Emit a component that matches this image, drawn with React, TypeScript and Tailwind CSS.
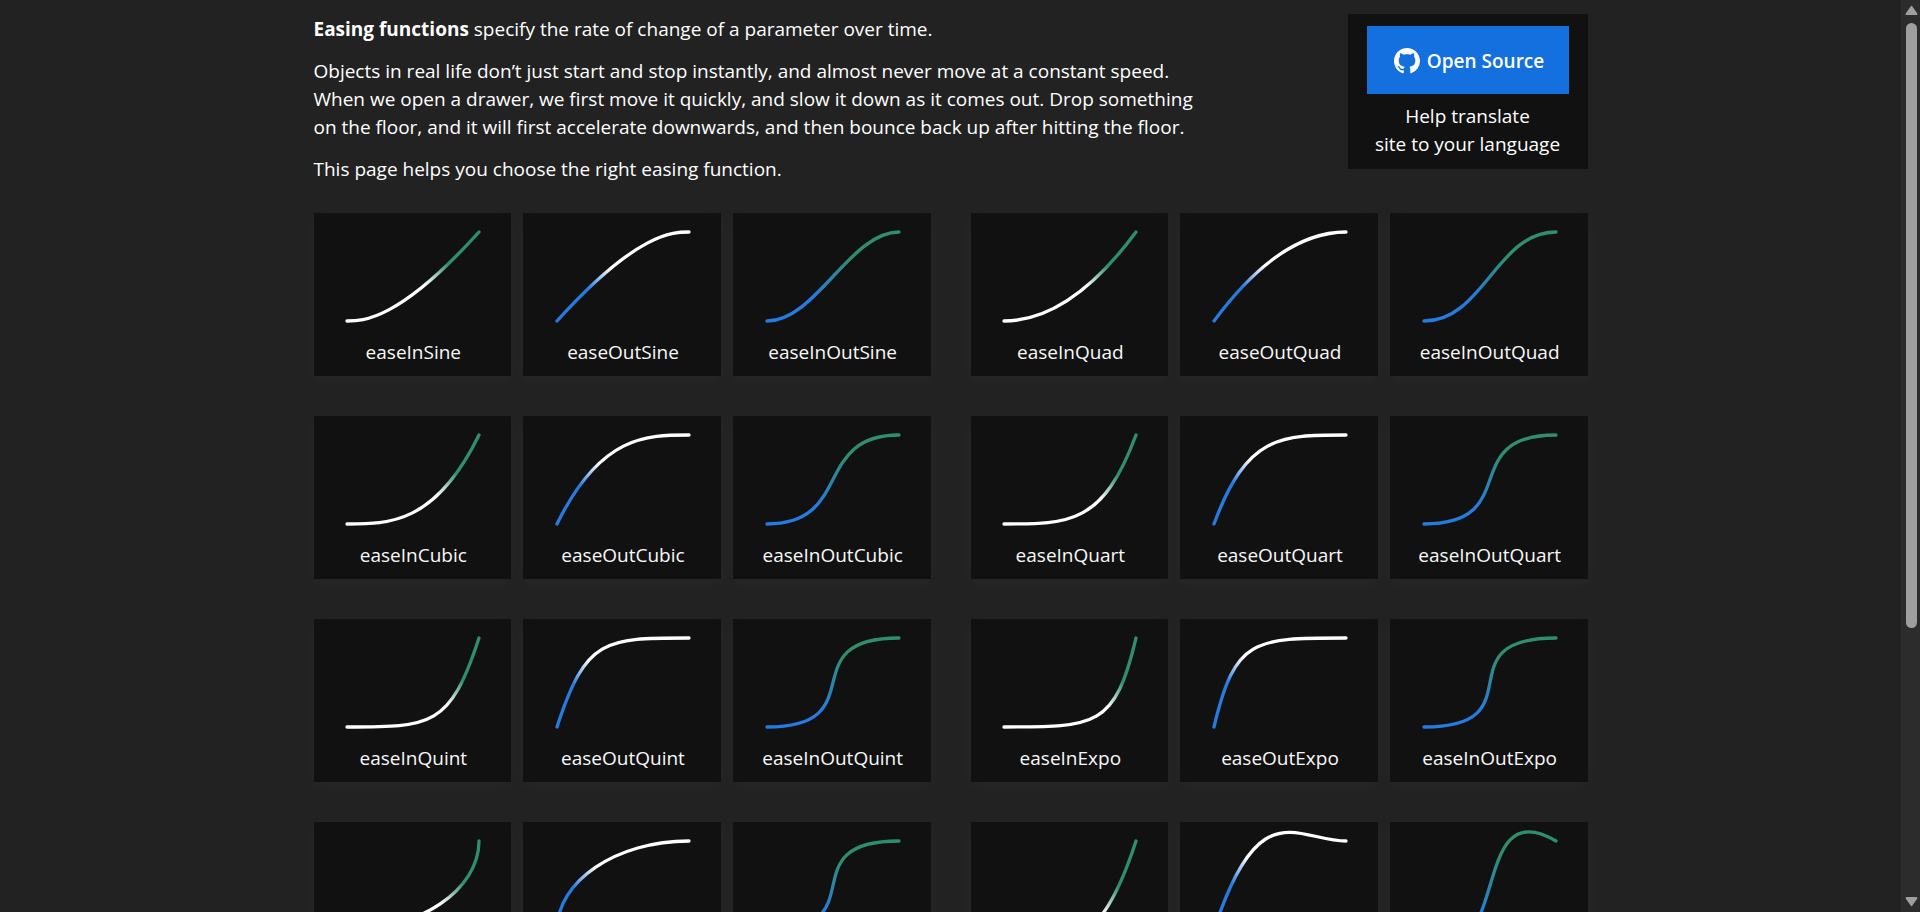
import React from "react";

type Kind = "in" | "out" | "inout";
type Points = [number, number, number, number];
type Easing = { name: string; kind: Kind; points: Points };

const groups: Easing[][] = [
  [
    { name: "easeInSine", kind: "in", points: [0.12, 0, 0.39, 0] },
    { name: "easeOutSine", kind: "out", points: [0.61, 1, 0.88, 1] },
    { name: "easeInOutSine", kind: "inout", points: [0.37, 0, 0.63, 1] },
  ],
  [
    { name: "easeInQuad", kind: "in", points: [0.11, 0, 0.5, 0] },
    { name: "easeOutQuad", kind: "out", points: [0.5, 1, 0.89, 1] },
    { name: "easeInOutQuad", kind: "inout", points: [0.45, 0, 0.55, 1] },
  ],
  [
    { name: "easeInCubic", kind: "in", points: [0.32, 0, 0.67, 0] },
    { name: "easeOutCubic", kind: "out", points: [0.33, 1, 0.68, 1] },
    { name: "easeInOutCubic", kind: "inout", points: [0.65, 0, 0.35, 1] },
  ],
  [
    { name: "easeInQuart", kind: "in", points: [0.5, 0, 0.75, 0] },
    { name: "easeOutQuart", kind: "out", points: [0.25, 1, 0.5, 1] },
    { name: "easeInOutQuart", kind: "inout", points: [0.76, 0, 0.24, 1] },
  ],
  [
    { name: "easeInQuint", kind: "in", points: [0.64, 0, 0.78, 0] },
    { name: "easeOutQuint", kind: "out", points: [0.22, 1, 0.36, 1] },
    { name: "easeInOutQuint", kind: "inout", points: [0.83, 0, 0.17, 1] },
  ],
  [
    { name: "easeInExpo", kind: "in", points: [0.7, 0, 0.84, 0] },
    { name: "easeOutExpo", kind: "out", points: [0.16, 1, 0.3, 1] },
    { name: "easeInOutExpo", kind: "inout", points: [0.87, 0, 0.13, 1] },
  ],
  [
    { name: "easeInCirc", kind: "in", points: [0.55, 0, 1, 0.45] },
    { name: "easeOutCirc", kind: "out", points: [0, 0.55, 0.45, 1] },
    { name: "easeInOutCirc", kind: "inout", points: [0.85, 0, 0.15, 1] },
  ],
  [
    { name: "easeInBack", kind: "in", points: [0.36, 0, 0.66, -0.56] },
    { name: "easeOutBack", kind: "out", points: [0.34, 1.56, 0.64, 1] },
    { name: "easeInOutBack", kind: "inout", points: [0.68, -0.6, 0.32, 1.6] },
  ],
];

const WIDTH = 132;
const HEIGHT = 89;

const gradients: Record<Kind, { from: string; to: string; start: string; end: string }> = {
  in: { from: "#ffffff", to: "#2f8f6b", start: "50%", end: "70%" },
  out: { from: "#267be0", to: "#ffffff", start: "30%", end: "50%" },
  inout: { from: "#267be0", to: "#2f8f6b", start: "30%", end: "70%" },
};

function Curve({ name, kind, points }: Easing) {
  const [x1, y1, x2, y2] = points;
  const g = gradients[kind];
  const px = (x: number) => x * WIDTH;
  const py = (y: number) => HEIGHT - y * HEIGHT;
  return (
    <svg width={WIDTH} height={HEIGHT} viewBox={`0 0 ${WIDTH} ${HEIGHT}`} className="overflow-visible" aria-hidden="true">
      <defs>
        <linearGradient id={`stroke-${name}`} x1="0" y1="1" x2="1" y2="0">
          <stop offset={g.start} stopColor={g.from} />
          <stop offset={g.end} stopColor={g.to} />
        </linearGradient>
      </defs>
      <path
        d={`M0 ${HEIGHT}C${px(x1)} ${py(y1)} ${px(x2)} ${py(y2)} ${WIDTH} 0`}
        fill="none"
        stroke={`url(#stroke-${name})`}
        strokeWidth="3.3"
        strokeLinecap="round"
      />
    </svg>
  );
}

function Card(easing: Easing) {
  return (
    <li className="flex">
      <a
        href={`#${easing.name}`}
        className="flex flex-1 flex-col items-center bg-[#111111] pt-[19px] pb-[10px] pl-0.5 shadow-[0_4px_16px_rgba(255,255,255,0.03)]"
      >
        <Curve {...easing} />
        <span className="mt-[17px] leading-7 text-[#f8f8f8]">{easing.name}</span>
      </a>
    </li>
  );
}

function GithubMark() {
  return (
    <svg width="26" height="26" viewBox="0 0 16 16" fill="currentColor" aria-hidden="true">
      <path d="M8 0C3.58 0 0 3.58 0 8c0 3.54 2.29 6.53 5.47 7.59.4.07.55-.17.55-.38 0-.19-.01-.82-.01-1.49-2.01.37-2.53-.49-2.69-.94-.09-.23-.48-.94-.82-1.13-.28-.15-.68-.52-.01-.53.63-.01 1.08.58 1.23.82.72 1.21 1.87.87 2.33.66.07-.52.28-.87.51-1.07-1.78-.2-3.64-.89-3.64-3.95 0-.87.31-1.59.82-2.15-.08-.2-.36-1.02.08-2.12 0 0 .67-.21 2.2.82.64-.18 1.32-.27 2-.27s1.36.09 2 .27c1.53-1.04 2.2-.82 2.2-.82.44 1.1.16 1.92.08 2.12.51.56.82 1.27.82 2.15 0 3.07-1.87 3.75-3.65 3.95.29.25.54.73.54 1.48 0 1.07-.01 1.93-.01 2.2 0 .21.15.46.55.38A8.01 8.01 0 0 0 16 8c0-4.42-3.58-8-8-8Z" />
    </svg>
  );
}

function Scrollbar() {
  return (
    <div className="flex w-[19px] shrink-0 flex-col items-center border-l border-[#303030] bg-[#2c2c2c] py-[5px]" aria-hidden="true">
      <svg width="13" height="10" viewBox="0 0 13 10" fill="#9f9f9f">
        <path d="M5.6 1.4Q6.5 0 7.4 1.4L12.3 8.4Q13 10 11.4 10H1.6Q0 10 .7 8.4Z" />
      </svg>
      <div className="mt-2 w-[11px] flex-[605] rounded-full bg-[#9f9f9f]" />
      <div className="flex-[269]" />
      <svg width="13" height="10" viewBox="0 0 13 10" fill="#9f9f9f">
        <path d="M5.6 8.6Q6.5 10 7.4 8.6L12.3 1.6Q13 0 11.4 0H1.6Q0 0 .7 1.6Z" />
      </svg>
    </div>
  );
}

export default function App() {
  return (
    <div className="flex h-screen overflow-hidden bg-[#222222] font-['Open_Sans','Noto_Sans',sans-serif] text-[19px] leading-7 text-white">
      <main className="min-w-0 flex-1 overflow-hidden px-4 pt-[14px]">
        <div className="mx-auto max-w-[1274px]">
          <header className="flex items-start justify-between gap-8">
            <div className="flex max-w-[900px] flex-col gap-[14px] pt-px">
              <p>
                <strong className="font-bold">Easing functions</strong> specify the rate of change of a parameter over time.
              </p>
              <p>
                Objects in real life don’t just start and stop instantly, and almost never move at a constant speed. When
                we open a drawer, we first move it quickly, and slow it down as it comes out. Drop something on the
                floor, and it will first accelerate downwards, and then bounce back up after hitting the floor.
              </p>
              <p>This page helps you choose the right easing function.</p>
            </div>
            <aside className="flex w-60 shrink-0 flex-col items-center bg-[#111111] px-[19px] pt-3 pb-[11px] text-center">
              <a
                href="#source"
                className="flex h-[68px] w-full items-center justify-center gap-[7px] bg-[#1470df] pt-0.5 pl-[3px] font-semibold"
              >
                <GithubMark />
                Open Source
              </a>
              <a href="#translate" className="mt-2">
                Help translate
                <br />
                site to your language
              </a>
            </aside>
          </header>
          <div className="mt-[30px] grid grid-cols-2 gap-10">
            {groups.map((group) => (
              <ul key={group[0].name} className="grid grid-cols-3 gap-3">
                {group.map((easing) => (
                  <Card key={easing.name} {...easing} />
                ))}
              </ul>
            ))}
          </div>
        </div>
      </main>
      <Scrollbar />
    </div>
  );
}
